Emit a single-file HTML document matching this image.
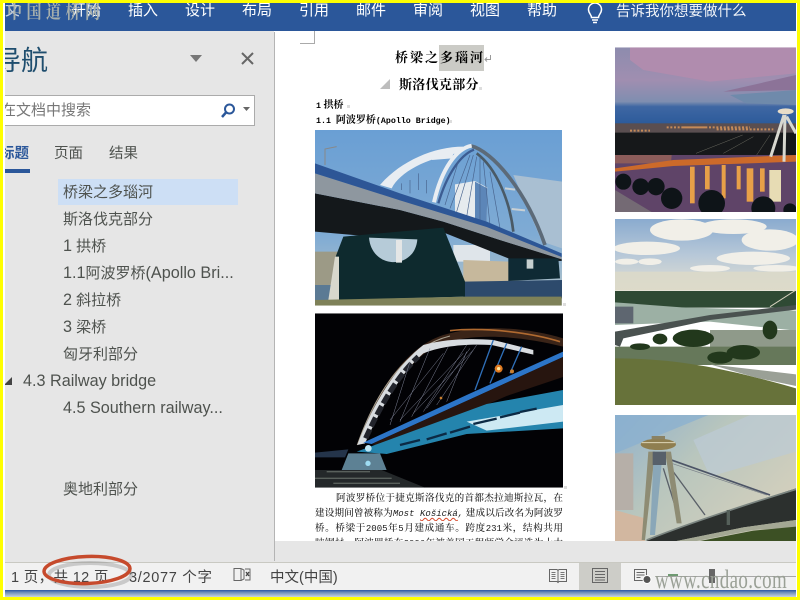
<!DOCTYPE html>
<html lang="zh">
<head>
<meta charset="utf-8">
<style>
html,body{margin:0;padding:0;width:800px;height:600px;overflow:hidden;background:#fff}
body{position:relative;font-family:"Liberation Sans","Noto Sans CJK SC",sans-serif}
.a{position:absolute;white-space:nowrap}
.tab{position:absolute;top:1px;color:#fff;font-size:15px;line-height:20px;white-space:nowrap}
.nav{position:absolute;color:#4e524e;font-size:15px;line-height:20px;white-space:nowrap}
.nav b{font-weight:normal;font-size:16.2px}
.doc{position:absolute;color:#000;font-family:"Liberation Serif","Noto Serif CJK SC",serif;white-space:nowrap}
.doc .m{font-family:"Liberation Mono",monospace;font-size:8.3px}
.p{left:315px;width:248px;font-size:9.6px;line-height:15px;color:#1c1c1c;white-space:normal;text-align:justify;text-align-last:justify;height:15px;overflow:hidden;font-weight:500}
.p .m{font-size:9px}
.st{position:absolute;color:#444;font-size:14.5px;line-height:20px;top:568px;white-space:nowrap}
.mk{position:absolute;width:3px;height:3px;background:#ddd}
</style>
</head>
<body>
<!-- ribbon -->
<div class="a" style="left:0;top:0;width:800px;height:31px;background:#2b579a"></div>
<div class="tab" style="left:5px;color:#c9d3e2;width:14px;overflow:hidden">文件</div>
<div class="tab" style="left:71px">开始</div>
<div class="tab" style="left:128px">插入</div>
<div class="tab" style="left:185px">设计</div>
<div class="tab" style="left:242px">布局</div>
<div class="tab" style="left:299px">引用</div>
<div class="tab" style="left:356px">邮件</div>
<div class="tab" style="left:413px">审阅</div>
<div class="tab" style="left:470px">视图</div>
<div class="tab" style="left:527px">帮助</div>
<div class="tab" style="left:616px;top:2px;font-size:14.5px;color:#f0f3f8">告诉我你想要做什么</div>
<svg class="a" style="left:584px;top:2px" width="22" height="22" viewBox="0 0 22 22" fill="none" stroke="#fff" stroke-width="1.5"><path d="M7.5 15.5c0-3-3-4-3-8a6.500 6.500 0 0 1 13 0c0 4-3 5-3 8z"/><path d="M8 18h6M9 20.500h4"/></svg>
<div class="a" style="left:7px;top:3px;color:#a6afad;font:bold 15px/16px 'Liberation Serif','Noto Serif CJK SC',serif;letter-spacing:4.5px;transform:scaleY(1.25);transform-origin:left top">中国道桥网</div>

<!-- nav pane -->
<div class="a" style="left:0;top:31px;width:274px;height:532px;background:#e6e6e6"></div>
<div class="a" style="left:274px;top:32px;width:1px;height:531px;background:#b4b4b4"></div>
<div class="a" style="left:5px;top:42px;color:#1f4e6e;font-size:27px;line-height:38px;width:60px;overflow:hidden;text-indent:-11px">导航</div>
<svg class="a" style="left:189px;top:53px" width="14" height="10"><path d="M1 2h12L7 9z" fill="#777"/></svg>
<svg class="a" style="left:240px;top:51px" width="15" height="15"><path d="M2 2l11 11M13 2L2 13" stroke="#666" stroke-width="2"/></svg>
<div class="a" style="left:4px;top:95px;width:250px;height:29px;background:#fff;border:1px solid #ababab;border-left:0"></div>
<div class="a" style="left:5px;top:101px;width:110px;overflow:hidden;color:#777;font-size:15px;line-height:20px;text-indent:-4px">在文档中搜索</div>
<svg class="a" style="left:220px;top:102px" width="18" height="18" fill="none" stroke="#2b579a" stroke-width="2"><circle cx="9.500" cy="7" r="4.500"/><path d="M6 10.500L2 15" stroke-width="2.500"/></svg>
<svg class="a" style="left:243px;top:106px" width="8" height="6"><path d="M0 1h7L3.500 5z" fill="#666"/></svg>
<div class="nav" style="left:5px;top:144px;width:25px;overflow:hidden;color:#2b579a;font-weight:bold;font-size:14.500px;text-indent:-5px">标题</div>
<div class="nav" style="left:54px;top:144px;font-size:14.500px">页面</div>
<div class="nav" style="left:109px;top:144px;font-size:14.500px">结果</div>
<div class="a" style="left:5px;top:169px;width:25px;height:4px;background:#2b579a"></div>
<div class="a" style="left:58px;top:179px;width:180px;height:26px;background:#cddff5"></div>
<div class="nav" style="left:63px;top:183px">桥梁之多瑙河</div>
<div class="nav" style="left:63px;top:210px">斯洛伐克部分</div>
<div class="nav" style="left:63px;top:236px"><b>1</b> 拱桥</div>
<div class="nav" style="left:63px;top:263px"><b>1.1</b>阿波罗桥<b>(Apollo Bri...</b></div>
<div class="nav" style="left:63px;top:290px"><b>2</b> 斜拉桥</div>
<div class="nav" style="left:63px;top:317px"><b>3</b> 梁桥</div>
<div class="nav" style="left:63px;top:345px">匈牙利部分</div>
<svg class="a" style="left:4px;top:376px" width="9" height="10"><path d="M8 1v8H0z" fill="#444"/></svg>
<div class="nav" style="left:23px;top:371px"><b>4.3 Railway bridge</b></div>
<div class="nav" style="left:63px;top:398px"><b>4.5 Southern railway...</b></div>
<div class="nav" style="left:63px;top:480px">奥地利部分</div>

<!-- document -->
<div class="a" style="left:300px;top:31px;width:15px;height:13px;border-right:1px solid #aaa;border-bottom:1px solid #aaa;box-sizing:border-box"></div>
<div class="a" style="left:439px;top:45px;width:45px;height:26px;background:#cbcbc6"></div>
<div class="doc" style="left:395px;top:49px;font-size:13px;line-height:18px;font-weight:bold;letter-spacing:2px">桥梁之多瑙河</div>
<svg class="a" style="left:484px;top:54px" width="8" height="8" fill="none" stroke="#999"><path d="M6.500 1v4.500H1M3 3.500L1 5.500 3 7.500"/></svg>
<svg class="a" style="left:380px;top:79px" width="11" height="11"><path d="M10 0v10H0z" fill="#bdbdbd"/></svg>
<div class="doc" style="left:399px;top:76px;font-size:13px;line-height:18px;font-weight:bold;letter-spacing:.3px">斯洛伐克部分</div>
<div class="mk" style="left:479px;top:87px"></div>
<div class="doc" style="left:316px;top:99px;font-size:10px;line-height:14px;font-weight:bold"><span class="m">1</span> 拱桥</div>
<div class="mk" style="left:347px;top:105px"></div>
<div class="doc" style="left:316px;top:114px;font-size:10px;line-height:14px;font-weight:bold"><span class="m">1.1 </span>阿波罗桥<span class="m">(Apollo Bridge)</span></div>
<div class="mk" style="left:449px;top:120px"></div>
<div class="mk" style="left:563px;top:303px"></div>
<div class="mk" style="left:564px;top:486px"></div>

<div class="doc p" style="top:491px;padding-left:21px;width:227px">阿波罗桥位于捷克斯洛伐克的首都杰拉迪斯拉瓦，在</div>
<div class="doc p" style="top:506px">建设期间曾被称为<i class="m">Most <span style="text-decoration:underline wavy #d8482a">Košická</span>,</i> 建成以后改名为阿波罗</div>
<div class="doc p" style="top:521px">桥。桥梁于<span class="m">2005</span>年<span class="m">5</span>月建成通车。跨度<span class="m">231</span>米，结构共用<span class="m">5240</span></div>
<div class="doc p" style="top:536px">吨钢材，阿波罗桥在<span class="m">2006</span>年被美国工程师学会评选为十大</div>

<!-- photos -->
<svg class="a" style="left:0;top:0" width="800" height="600" viewBox="0 0 800 600">
<defs>
<linearGradient id="d1" x1="0" y1="0" x2="0" y2="1"><stop offset="0" stop-color="#8d8cae"/><stop offset=".2" stop-color="#a08eb0"/><stop offset=".33" stop-color="#7f8eb0"/><stop offset=".36" stop-color="#3f67a3"/><stop offset=".47" stop-color="#2b5a9a"/></linearGradient>
<linearGradient id="d2" x1="0" y1="0" x2="0" y2="1"><stop offset="0" stop-color="#8aabcf"/><stop offset=".5" stop-color="#b7c8d8"/><stop offset="1" stop-color="#e2dfd2"/></linearGradient>
<linearGradient id="d3" x1="0" y1="0" x2="1" y2=".7"><stop offset="0" stop-color="#8fb0cc"/><stop offset=".45" stop-color="#b9c6bd"/><stop offset="1" stop-color="#d5d0bd"/></linearGradient>
<linearGradient id="sky1" x1="0" y1="0" x2="0" y2="1"><stop offset="0" stop-color="#6a9fd4"/><stop offset=".6" stop-color="#7fabd4"/><stop offset="1" stop-color="#bcc8c8"/></linearGradient>
<clipPath id="c1"><rect x="45" y="15" width="741" height="527"/></clipPath>
<clipPath id="c2"><rect x="45" y="10" width="744" height="523"/></clipPath>
<clipPath id="c3"><rect x="15" y="22" width="544" height="494"/></clipPath>
<clipPath id="c4"><rect x="15" y="12" width="544" height="558"/></clipPath>
<clipPath id="c5"><rect x="15" y="15" width="544" height="378"/></clipPath>
</defs>

<!-- image 1 -->
<g transform="translate(300,125) scale(.33333)" clip-path="url(#c1)">
<rect x="45" y="15" width="741" height="527" fill="url(#sky1)"/>
<path d="M640 150l146 20v200l-60-20z" fill="#a9bfd2"/>
<path d="M465 178l60-10 37 20-2 110-95-30z" fill="#e6ebee"/>
<path d="M525 170l37 20-2 108-35-12z" fill="#5c86b8"/>
<path d="M460 360h110v50H460z" fill="#dfe5ea"/>
<path d="M45 380h70v100H45z" fill="#9c9a86"/>
<path d="M45 480h70v45H45z" fill="#5b7a94"/>
<path d="M490 405l140 5v60H490z" fill="#c6b89c"/>
<path d="M490 470l296 -5v55l-296 5z" fill="#2d4a6c"/>
<path d="M240 180C300 110 400 65 490 65L470 85C380 100 300 140 275 190z" fill="#e8edf2"/>
<path d="M400 90l60-5-4 15-60 5z" fill="#e8edf2"/>
<path d="M530 85C590 130 630 230 640 320" fill="none" stroke="#4a5a66" stroke-width="8"/>
<path d="M510 62c70 15 170 140 225 298" fill="none" stroke="#5c6a78" stroke-width="11"/>
<path d="M415 235C440 150 480 90 522 74" fill="none" stroke="#3c5c92" stroke-width="7"/>
<path d="M402 232C425 130 470 70 515 62" fill="none" stroke="#e8edf2" stroke-width="12"/>
<path d="M615 190l30 4M635 252l40 4" stroke="#c8d0d4" stroke-width="6"/>
<g stroke="#48648e" stroke-width="2" fill="none"><path d="M450 250l60-160M470 260l50-170M500 275l30-180M540 295l0-200M570 300l-20-190M600 310l-30-170M435 240l40-130M380 165v40M355 145v50M330 165v40M305 175v20"/></g>
<path d="M45 205L300 255 430 290 600 345 785 402V408L630 402 430 322 250 338 45 320z" fill="#14181b"/>
<path d="M45 145L300 225 560 305 785 395V403L600 345 430 290 300 255 45 205z" fill="#8e979f"/>
<path d="M45 115L300 205 560 290 785 385V396L560 306 300 226 45 145z" fill="#2d5696"/>
<path d="M130 335L430 308 495 470 495 515 110 525 105 400z" fill="#0e2a2e"/>
<path d="M207 338C215 435 345 435 352 343z" fill="#b6cbd8"/>
<path d="M288 345h18v68h-18z" fill="#e4e6e6"/>
<path d="M625 400l150 0 5 60-155 8z" fill="#0f2a34"/>
<path d="M680 403h20v28h-20z" fill="#c6cfcf"/>
<path d="M85 525l20-130 12 0v130z" fill="#d8d8cc"/>
<path d="M45 525L500 515 785 515V542H45z" fill="#7e8158"/>
<path d="M75 120V72L110 65" stroke="#888" stroke-width="3" fill="none"/>
</g>

<!-- image 2 -->
<g transform="translate(300,310) scale(.33333)" clip-path="url(#c2)">
<rect x="45" y="10" width="744" height="523" fill="#020205"/>
<path d="M170 405C230 240 320 110 430 75c120-35 260-20 359 10v25C650 75 520 70 430 100 340 125 250 270 190 400z" fill="#3a2418"/>
<path d="M172 405C230 240 320 110 450 78" fill="none" stroke="#a8a090" stroke-width="3"/>
<path d="M450 62C560 50 700 70 780 95" fill="none" stroke="#b06a30" stroke-width="5"/>
<path d="M172 405C215 290 285 170 370 105c70-20 150-20 210-15l120 30 0 14L575 105C490 100 420 110 370 130 300 190 240 300 195 400z" fill="#d8dce0"/>
<path d="M197 385C240 290 290 200 355 140" fill="none" stroke="#22242c" stroke-width="16" stroke-dasharray="30 9"/>
<g stroke="#7e8498" stroke-width="1.500" fill="none"><path d="M270 345l60-190M300 335l90-220M335 320l110-210M370 305l130-200M410 285l120-180M440 275l60-150M270 330l160-200M300 330l190-200M340 310l180-190M380 295l130-180"/></g>
<g stroke="#2f6fb8" stroke-width="4" fill="none"><path d="M525 240l55-150M570 220l50-120M630 190l35-80"/></g>
<path d="M190 398L500 255 789 125v16L510 268 215 402z" fill="#2c75c8"/>
<path d="M215 402L510 268 789 141v60L620 258 260 415z" fill="#27150f"/>
<path d="M170 425L560 282 789 240v115L500 372 260 432z" fill="#2484ad"/>
<path d="M500 335L789 285v50L560 362z" fill="#cde9f3"/>
<path d="M300 405l60-15M380 388l60-18M450 368l60-18M520 342l70-16M600 322l60-14M660 306l50-10" stroke="#0c2a44" stroke-width="7"/>
<path d="M45 428l100-10-10 24H45z" fill="#24344a"/>
<path d="M125 480l20-50h95l20 50z" fill="#5d8194"/>
<circle cx="205" cy="415" r="10" fill="#bfe6f4"/><circle cx="204" cy="460" r="8" fill="#9edcf2"/>
<circle cx="596" cy="176" r="12" fill="#e07a20"/><circle cx="596" cy="176" r="5" fill="#ffe7a0"/>
<circle cx="636" cy="184" r="6" fill="#c87f30"/><circle cx="423" cy="264" r="4" fill="#c87f30"/>
<path d="M45 480h200l130 53H45z" fill="#24282a"/>
<path d="M80 485h130M100 520h200M45 505h230" stroke="#59605c" stroke-width="4"/>
</g>

<!-- right image 1 -->
<g transform="translate(610,40) scale(.33333)" clip-path="url(#c3)">
<rect x="15" y="22" width="544" height="494" fill="url(#d1)"/>
<path d="M60 22H558V100L300 125 100 90 60 60z" fill="#b08cae"/>
<path d="M340 155l218-50v45z" fill="#8c7398"/>
<path d="M360 165l198-15v45l-150-5z" fill="#6f8aab"/>
<rect x="15" y="250" width="544" height="30" fill="#5a4e50"/>
<path d="M15 278H558V345H15z" fill="#16181a"/>
<path d="M60 272h60M170 262h120M220 262h200M320 268h170" stroke="#c58a58" stroke-width="6" stroke-dasharray="6 5"/>
<path d="M15 345H558V516H15z" fill="#5f4468"/>
<path d="M15 345h170l-2 25H15z" fill="#8c5c5a"/>
<path d="M15 385L190 360 558 345v20L190 378 15 395z" fill="#cc6a2a"/>
<g fill="#e8a048"><rect x="240" y="380" width="14" height="110"/><rect x="285" y="378" width="14" height="70"/><rect x="335" y="375" width="12" height="100"/><rect x="380" y="378" width="12" height="70"/><rect x="410" y="385" width="20" height="100"/><rect x="450" y="385" width="14" height="70"/></g>
<rect x="478" y="390" width="35" height="95" fill="#e7dcb4"/>
<path d="M482 350L522 225M525 225L522 365M530 230l28 50" stroke="#d8d8d0" stroke-width="9" fill="none"/>
<ellipse cx="527" cy="214" rx="24" ry="9" fill="#e8ddc8"/>
<path d="M258 340l140-55M340 340l90-50M440 345l40-60" stroke="#6a6a60" stroke-width="1.500"/>
<g fill="#0e1418"><circle cx="40" cy="425" r="24"/><circle cx="92" cy="440" r="25"/><circle cx="138" cy="440" r="26"/><circle cx="185" cy="475" r="32"/><circle cx="305" cy="490" r="40"/><circle cx="460" cy="505" r="36"/><circle cx="540" cy="510" r="20"/></g>
<path d="M15 450l110 66H15z" fill="#746a74"/>
</g>

<!-- right image 2 -->
<g transform="translate(610,215) scale(.33333)" clip-path="url(#c4)">
<rect x="15" y="12" width="544" height="215" fill="url(#d2)"/>
<g fill="#f1efe8"><ellipse cx="215" cy="45" rx="95" ry="32"/><ellipse cx="370" cy="35" rx="100" ry="22"/><ellipse cx="110" cy="100" rx="100" ry="20"/><ellipse cx="480" cy="75" rx="85" ry="32"/><ellipse cx="430" cy="130" rx="110" ry="20"/><ellipse cx="50" cy="140" rx="35" ry="9"/><ellipse cx="120" cy="140" rx="35" ry="10"/><ellipse cx="300" cy="160" rx="60" ry="10"/><ellipse cx="500" cy="160" rx="70" ry="10"/></g>
<rect x="15" y="170" width="544" height="57" fill="#dcd9c8" opacity=".85"/>
<rect x="15" y="228" width="544" height="50" fill="#2f4a34"/>
<path d="M15 262l200 15 343 10v60L300 320 15 330z" fill="#9cb0a4"/>
<path d="M15 350L300 300 558 270v14L300 315 40 370 30 395 15 390z" fill="#4a5250"/>
<path d="M300 345h258v85H300z" fill="#8f9a8a"/>
<path d="M15 395h545v55H15z" fill="#66785a"/>
<path d="M15 275h55v50H15z" fill="#5e6670"/>
<g fill="#22381c"><ellipse cx="250" cy="370" rx="62" ry="26"/><ellipse cx="400" cy="412" rx="50" ry="22"/><ellipse cx="480" cy="345" rx="22" ry="28"/><ellipse cx="150" cy="372" rx="22" ry="16"/><ellipse cx="330" cy="428" rx="38" ry="18"/><ellipse cx="90" cy="395" rx="30" ry="10"/></g>
<path d="M15 430C200 430 350 460 558 520V570H15z" fill="#67723a"/>
<path d="M300 448l258 30v35l-120-25z" fill="#9aa096"/>
<path d="M480 275l78-50" stroke="#d9d4c0" stroke-width="3"/>
</g>

<!-- right image 3 -->
<g transform="translate(610,410) scale(.33333)" clip-path="url(#c5)">
<rect x="15" y="15" width="544" height="378" fill="url(#d3)"/>
<path d="M15 15h280L15 130z" fill="#8ab0d0" opacity=".75"/>
<path d="M15 130h55v170H15z" fill="#b6afa8"/>
<path d="M15 300l90 25v68H15z" fill="#d2b7a0"/>
<path d="M558 15v110L300 200 250 90 420 15z" fill="#bccad6" opacity=".7"/>
<path d="M170 145l310 110" stroke="#4c5466" stroke-width="5"/>
<path d="M170 155l300 100" stroke="#7a8088" stroke-width="2"/>
<path d="M175 165l110 150M160 175l50 160" stroke="#5a6068" stroke-width="4"/>
<path d="M115 125h20l-30 265H95zM165 125h18l32 215h-15z" fill="#8e8c74"/>
<path d="M130 160h25l-20 215h-15z" fill="#8aa7b8"/>
<rect x="128" y="125" width="40" height="40" fill="#57606a"/>
<ellipse cx="145" cy="103" rx="53" ry="17" fill="#8f7e50"/>
<path d="M95 98h100" stroke="#ded6b6" stroke-width="3"/>
<rect x="125" y="78" width="40" height="10" fill="#8a8264"/>
<path d="M108 393C250 335 420 280 558 235v95L400 352 200 393z" fill="#2c302e"/>
<path d="M110 390C250 335 420 280 558 238" fill="none" stroke="#7a8480" stroke-width="5"/>
<path d="M350 300h10v45h-10z" fill="#55605a"/>
<path d="M200 393L400 352 558 330v22L430 360 260 393z" fill="#a4a894"/>
<path d="M270 393L430 362 558 350v43z" fill="#3c5024"/>
</g>
</svg>

<!-- bottom -->
<div class="a" style="left:0;top:541px;width:800px;height:22px;background:#e6e6e6"></div>
<div class="a" style="left:274px;top:541px;width:1px;height:20px;background:#b4b4b4"></div>
<div class="a" style="left:0;top:562px;width:800px;height:1px;background:#c9c9c2"></div>
<div class="a" style="left:0;top:563px;width:800px;height:27px;background:#f1f1f1"></div>
<div class="a" style="left:0;top:590px;width:800px;height:7px;background:linear-gradient(#2b55a0,#6f8fb8 35%,#c9d4dc)"></div>
<div class="st" style="left:11px;letter-spacing:.35px">1 页，共 12 页</div>
<div class="st" style="left:129px;letter-spacing:.7px">3/2077 个字</div>
<div class="st" style="left:270px">中文(中国)</div>
<svg class="a" style="left:233px;top:567px" width="18" height="16" fill="none" stroke="#666"><path d="M1 1.500h7v12H1zM8 1.500l3 1.500v9l-3 1.500M12 2h5v11h-5"/><path d="M13 5l3 4M16 5l-3 4" stroke="#444" stroke-width="1.300"/></svg>
<div class="a" style="left:579px;top:563px;width:42px;height:27px;background:#cdcdc8"></div>
<svg class="a" style="left:548px;top:567px" width="20" height="17" fill="none" stroke="#666"><path d="M1.500 2.500h7.500l1 1 1-1h7.500v12h-7.500l-1 1-1-1H1.500zM10 3.500v11"/><path d="M3.500 5.500h4M3.500 7.500h4M3.500 9.500h4M3.500 11.500h4M12.500 5.500h4M12.500 7.500h4M12.500 9.500h4M12.500 11.500h4" stroke="#777"/></svg>
<svg class="a" style="left:591px;top:567px" width="18" height="18" fill="none" stroke="#666"><path d="M1.500 1.500h15v14h-15z"/><path d="M4 4.500h10M4 7.500h10M4 10.500h10M4 13h10"/></svg>
<svg class="a" style="left:633px;top:568px" width="19" height="17" fill="none" stroke="#666"><path d="M1.500 1.500h12v11h-12zM3.500 4.500h8M3.500 7h8M3.500 9.500h4"/><circle cx="14" cy="11.500" r="4" fill="#555" stroke="#fff"/></svg>
<div class="a" style="left:656px;top:576px;width:140px;height:1px;background:#a8a8a8"></div>
<div class="a" style="left:668px;top:574px;width:10px;height:2px;background:#6f9a72"></div>
<div class="a" style="left:709px;top:569px;width:6px;height:14px;background:#666"></div>
<div class="a" style="left:655px;top:565px;font:26px/30px 'Liberation Serif',serif;color:#9aa096;letter-spacing:.5px;transform:scaleX(.73);transform-origin:left top">www.cndao.com</div>

<!-- red ellipse -->
<svg class="a" style="left:0;top:545px" width="170" height="55" fill="none">
<ellipse cx="90" cy="30" rx="41" ry="12" stroke="#8f8f8f" stroke-width="4" opacity=".4"/>
<ellipse cx="87" cy="25" rx="43" ry="13.500" transform="rotate(-2 87 25)" stroke="#c64a2c" stroke-width="3.500"/>
</svg>

<!-- frame -->
<div class="a" style="left:3px;top:3px;width:2px;height:594px;background:#fff"></div>
<div class="a" style="left:796px;top:3px;width:1px;height:594px;background:#fff"></div>
<div class="a" style="left:0;top:0;width:800px;height:3px;background:#ffff00"></div>
<div class="a" style="left:0;top:0;width:3px;height:600px;background:#ffff00"></div>
<div class="a" style="left:797px;top:0;width:3px;height:600px;background:#ffff00"></div>
<div class="a" style="left:0;top:597px;width:800px;height:3px;background:#ffff00"></div>
</body>
</html>
